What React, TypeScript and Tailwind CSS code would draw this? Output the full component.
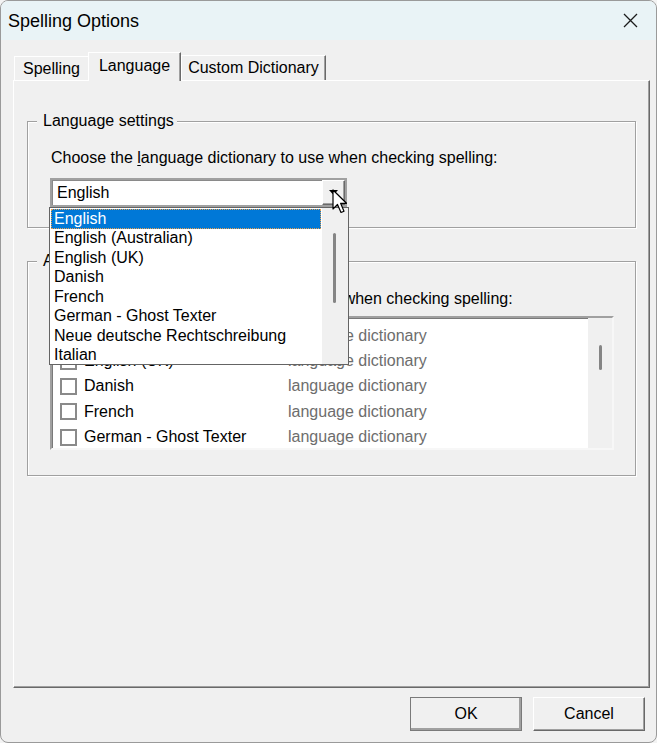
const dropItems = [
  'English',
  'English (Australian)',
  'English (UK)',
  'Danish',
  'French',
  'German - Ghost Texter',
  'Neue deutsche Rechtschreibung',
  'Italian',
]

const dictRows = ['English (Australian)', 'English (UK)', 'Danish', 'French', 'German - Ghost Texter']

const raised = 'border-t border-l border-white border-r border-b border-r-[#696969] border-b-[#696969] shadow-[inset_-1px_-1px_0_#a0a0a0]'
const etched = 'border border-[#a0a0a0] shadow-[inset_1px_1px_0_#ffffff,1px_1px_0_#ffffff]'

const App = () => {
  return (
    <div className="min-h-screen bg-[#f3f3f3] font-['Liberation_Sans',Arial,sans-serif] text-[16px] leading-[18px] text-black">
      <div className="w-[657px] h-[743px] flex flex-col rounded-[8px] border border-[#9a9a9a] overflow-hidden bg-[#f0f0f0]">
        {/* title bar */}
        <div className="h-[39px] shrink-0 bg-[#e9f3f6] flex items-center justify-between pl-[7px] pr-[18px]">
          <span className="text-[18px] leading-none">Spelling Options</span>
          <svg width="15" height="15" viewBox="0 0 15 15">
            <path d="M1 1L14 14M14 1L1 14" stroke="#1b1b1b" strokeWidth="1.3" />
          </svg>
        </div>

        <div className="flex-1 flex flex-col pl-[12px] pr-[6px] pt-[12px]">
          {/* tabs */}
          <div className="flex items-end h-[28px] relative z-10">
            <div className="ml-[1px] w-[74px] h-[24px] flex items-center justify-center border-t border-l border-white">
              Spelling
            </div>
            <div className={`w-[93px] h-[29px] -mb-[1px] bg-[#f0f0f0] flex items-center justify-center pb-[2px] ${raised} border-b-0 shadow-[inset_-1px_0_0_#a0a0a0]`}>
              Language
            </div>
            <div className={`w-[145px] h-[25px] flex items-center justify-center ${raised} border-b-0 shadow-[inset_-1px_0_0_#a0a0a0]`}>
              Custom Dictionary
            </div>
          </div>

          {/* tab panel */}
          <div className={`h-[608px] ${raised} px-[13px] pt-[40px]`}>
            {/* language settings group */}
            <div className={`${etched} pb-[20px]`}>
              <div className="-mt-[10px] h-[18px] ml-[9px] pl-[6px] pr-[3px] w-fit bg-[#f0f0f0]">Language settings</div>
              <p className="mt-[19px] ml-[23px]">
                Choose the <span className="underline underline-offset-2">l</span>anguage dictionary to use when checking spelling:
              </p>
              <div className="relative z-20 mt-[11px] ml-[22px] w-[297px] h-[29px] border-2 border-[#a0a0a0] shadow-[inset_1px_1px_0_#8a8a8a] bg-white flex items-center">
                <span className="pl-[5px]">English</span>
                <div className={`ml-auto w-[23px] h-full bg-[#f0f0f0] flex items-center justify-center ${raised}`}>
                  <svg width="9" height="5" viewBox="0 0 9 5">
                    <path d="M0 0H9L4.5 5Z" fill="#000" />
                  </svg>
                </div>

                {/* open dropdown list */}
                <div className="absolute top-[27px] -left-[3px] w-[300px] h-[158px] border border-[#646464] bg-white flex overflow-hidden">
                  <div className="w-[272px] p-[1px]">
                    {dropItems.map((item, i) => (
                      <div
                        key={item}
                        className={`h-[19.5px] pl-[3px] flex items-center whitespace-nowrap ${
                          i === 0 ? 'w-[270px] bg-[#0078d7] text-white outline-1 outline-dotted outline-[#e8a050] -outline-offset-1' : ''
                        }`}
                      >
                        {item}
                      </div>
                    ))}
                  </div>
                  <div className="flex-1 bg-[#f0f0f0] pl-[11px] pt-[25px]">
                    <div className="w-[3px] h-[70px] rounded-full bg-[#858585]" />
                  </div>
                </div>

                {/* mouse pointer */}
                <svg className="absolute left-[280px] top-[9px] z-30" width="17" height="26" viewBox="0 0 17 26">
                  <path
                    d="M1 1V20L5.5 15.5L9 23.5L12 22.2L8.6 14.3H14.5Z"
                    fill="#fff"
                    stroke="#000"
                    strokeWidth="1.2"
                    strokeLinejoin="round"
                  />
                </svg>
              </div>
            </div>

            {/* additional dictionaries group */}
            <div className={`${etched} mt-[33px] pb-[25px]`}>
              <div className="-mt-[10px] h-[18px] ml-[9px] pl-[6px] pr-[3px] w-fit bg-[#f0f0f0]">Additional dictionaries</div>
              <p className="mt-[20px] ml-[23px]">Choose the additional dictionaries to use when checking spelling:</p>
              <div className="mt-[8px] ml-[22px] w-[564px] h-[134px] border-2 border-t-[#a0a0a0] border-l-[#a0a0a0] border-r-[#f7f7f7] border-b-[#f7f7f7] shadow-[inset_1px_1px_0_#7a7a7a] bg-white flex overflow-hidden">
                <div className="flex-1 pt-[5px]">
                  {dictRows.map((row) => (
                    <div key={row} className="h-[25.4px] flex items-center whitespace-nowrap">
                      <div className="w-[236px] flex items-center pl-[8px]">
                        <span className="w-[17px] h-[17px] border-2 border-[#8a8a8a] bg-white shrink-0" />
                        <span className="ml-[7px]">{row}</span>
                      </div>
                      <span className="text-[#6d6d6d]">language dictionary</span>
                    </div>
                  ))}
                </div>
                <div className="w-[24px] bg-[#f0f0f0] pl-[11px] pt-[27px]">
                  <div className="w-[3px] h-[25px] rounded-full bg-[#858585]" />
                </div>
              </div>
            </div>
          </div>

          {/* dialog buttons */}
          <div className="flex justify-end gap-[11px] pt-[9px] pr-[5px]">
            <button className={`w-[112px] h-[34px] outline outline-1 outline-[#7a7a7a] -outline-offset-1 ${raised} shadow-[inset_-2px_-2px_0_#a0a0a0]`}>
              OK
            </button>
            <button className={`w-[112px] h-[34px] ${raised}`}>Cancel</button>
          </div>
        </div>
      </div>
    </div>
  )
}

export default App
